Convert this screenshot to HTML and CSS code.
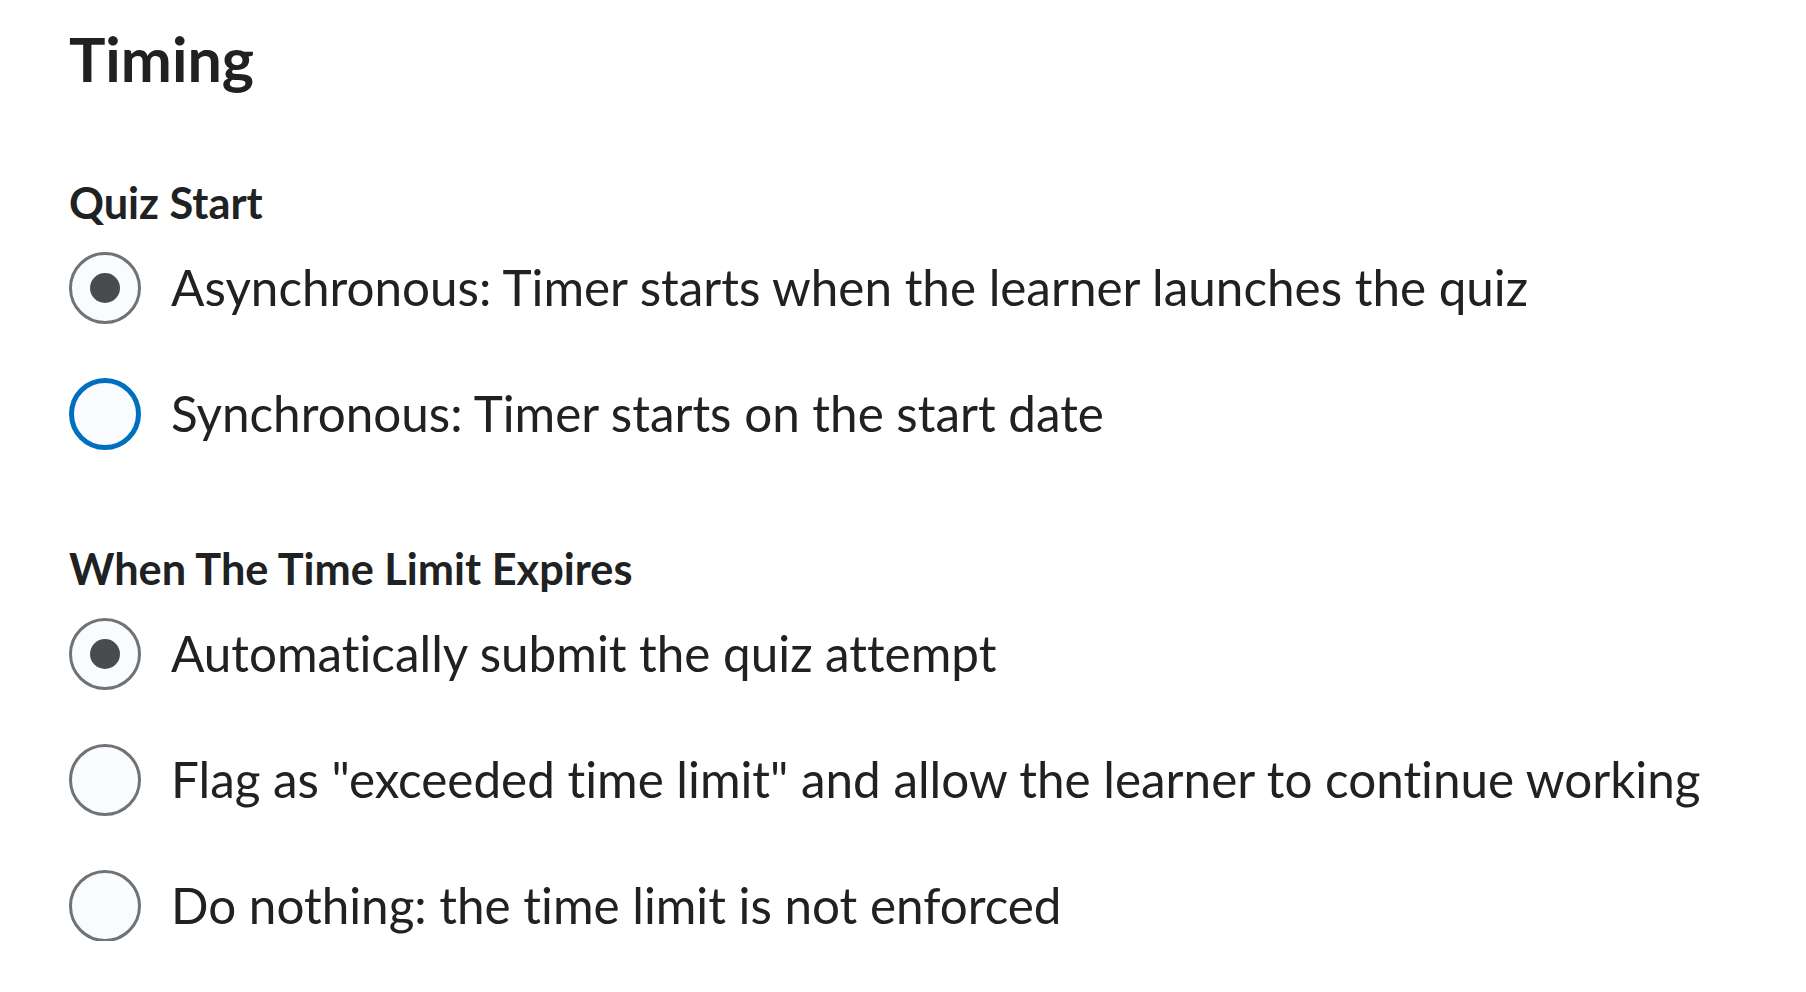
FILE: index.html
```html
<!DOCTYPE html>
<html lang="en">
<head>
<meta charset="utf-8">
<title>Timing</title>
<link rel="stylesheet" href="styles.css">
</head>
<body>
<main class="page">
  <h1 class="title">Timing</h1>

  <section class="group group-first">
    <h2 class="group-label">Quiz Start</h2>
    <div class="options">
      <label class="option">
        <input class="radio" type="radio" name="start" checked>
        <span class="option-text">Asynchronous: Timer starts when the learner launches the quiz</span>
      </label>
      <label class="option">
        <input class="radio radio-focus" type="radio" name="start">
        <span class="option-text">Synchronous: Timer starts on the start date</span>
      </label>
    </div>
  </section>

  <section class="group group-second">
    <h2 class="group-label">When The Time Limit Expires</h2>
    <div class="options">
      <label class="option">
        <input class="radio" type="radio" name="expire" checked>
        <span class="option-text">Automatically submit the quiz attempt</span>
      </label>
      <label class="option">
        <input class="radio" type="radio" name="expire">
        <span class="option-text">Flag as "exceeded time limit" and allow the learner to continue working</span>
      </label>
      <label class="option">
        <input class="radio" type="radio" name="expire">
        <span class="option-text">Do nothing: the time limit is not enforced</span>
      </label>
    </div>
  </section>
</main>
</body>
</html>
```

FILE: styles.css
```css
html, body {
  margin: 0;
  padding: 0;
  background: #ffffff;
}

body {
  font-family: Lato, "Open Sans", "Liberation Sans", sans-serif;
  color: #202122;
  font-variant-ligatures: none;
  font-feature-settings: "liga" 0, "clig" 0;
}

.page {
  padding: 21px 0 0 69px;
}

.title {
  margin: 0;
  font-size: 61px;
  line-height: 76px;
  font-weight: 700;
  color: #202122;
}

.group-first {
  margin-top: 80px;
}

.group-second {
  margin-top: 94px;
}

.group-label {
  margin: 0;
  font-size: 43.3px;
  line-height: 50px;
  font-weight: 700;
  color: #202122;
}

.options {
  display: flex;
  flex-direction: column;
  gap: 55px;
  margin-top: 25px;
}

.option {
  display: flex;
  align-items: center;
  height: 71px;
  cursor: pointer;
}

.radio {
  appearance: none;
  -webkit-appearance: none;
  box-sizing: border-box;
  flex: 0 0 auto;
  width: 72px;
  height: 72px;
  margin: 0;
  border: 3px solid #6e7376;
  border-radius: 50%;
  background: #f9fbff;
  display: flex;
  align-items: center;
  justify-content: center;
}

.radio:checked::after {
  content: "";
  width: 30px;
  height: 30px;
  border-radius: 50%;
  background: #494c4e;
}

.radio-focus {
  border: 5px solid #006fbf;
}

.option-text {
  margin-left: 30px;
  font-size: 49.4px;
  line-height: 59px;
  font-weight: 400;
  color: #202122;
  white-space: nowrap;
}
```
